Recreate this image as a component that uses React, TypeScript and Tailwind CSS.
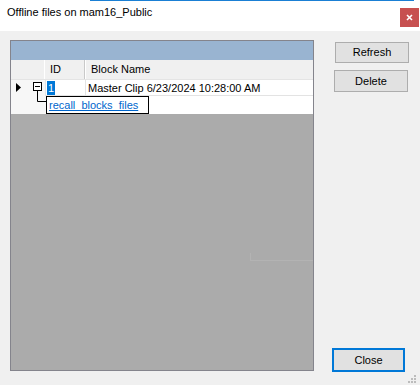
export default function App() {
  return (
    <div
      className="relative w-[420px] h-[385px] overflow-hidden bg-[#f0f0f0] text-[11px] text-black"
      style={{ fontFamily: '"Liberation Sans", Arial, sans-serif' }}
    >
      {/* window top accent */}
      <div className="absolute left-[90px] top-0 h-px w-[324px] bg-[#1a7fd4]" />

      {/* title bar */}
      <div className="flex h-[31px] bg-white">
        <div className="pl-[7px] pt-[6px] leading-[13px]">Offline files on mam16_Public</div>
        <div className="ml-auto mr-px mt-[8px] flex h-[19px] w-[19px] items-center justify-center bg-[#c75050]">
          <svg width="7" height="7" viewBox="0 0 7 7">
            <path d="M1 1L6 6M6 1L1 6" stroke="#fff" strokeWidth="1.6" />
          </svg>
        </div>
      </div>

      {/* body */}
      <div className="flex pl-[10px] pt-[9px]">
        <DataGrid />

        <div className="ml-[20px] flex h-[331px] w-[76px] flex-col">
          <button className="ml-px mt-[2px] h-[21px] w-[74px] border border-[#adadad] bg-[#e1e1e1] leading-[19px]">
            Refresh
          </button>
          <button className="mt-[7px] h-[22px] w-[74px] border border-[#adadad] bg-[#e1e1e1] leading-[20px]">
            Delete
          </button>
          <button className="-mb-px -ml-[2px] mt-auto h-[24px] w-[73px] border-2 border-[#0078d7] bg-[#e1e1e1] leading-[20px]">
            Close
          </button>
        </div>
      </div>

      {/* size grip */}
      <svg className="absolute left-[407px] top-[374px]" width="10" height="10" viewBox="0 0 10 10">
        <rect x="7" y="1" width="2" height="2" fill="#bcbcbc" />
        <rect x="4" y="4" width="2" height="2" fill="#bcbcbc" />
        <rect x="7" y="4" width="2" height="2" fill="#bcbcbc" />
        <rect x="1" y="7" width="2" height="2" fill="#bcbcbc" />
        <rect x="4" y="7" width="2" height="2" fill="#bcbcbc" />
        <rect x="7" y="7" width="2" height="2" fill="#bcbcbc" />
      </svg>
    </div>
  );
}

function DataGrid() {
  return (
    <div className="relative flex h-[331px] w-[304px] flex-col border border-[#84848c] bg-[#ababab]">
      {/* caption band */}
      <div className="h-[19px] bg-[#99b4d1]" />

      {/* column headers */}
      <div className="flex h-[20px] border-b border-[#e4e4e4] bg-[#f0f0f0] leading-[19px]">
        <div className="w-[34px] border-r border-white" />
        <div className="w-[40px] border-r border-[#c9c9c9] pl-[5px]">ID</div>
        <div className="flex-1 border-l border-white pl-[5px]">Block Name</div>
      </div>

      {/* data row */}
      <div className="flex h-[16px] leading-[16px]">
        <div className="w-[34px] bg-[#f7f7f7]" />
        <div className="w-[40px] border-b border-l border-[#e3e3e3] bg-white">
          <div className="ml-px mt-px h-[14px] w-[8px] bg-[#0078d7] text-center leading-[14px] text-white">1</div>
        </div>
        <div className="flex-1 border-b border-l border-[#e3e3e3] bg-white pl-[2px]">
          Master Clip 6/23/2024 10:28:00 AM
        </div>
      </div>

      {/* child relation row */}
      <div className="flex h-[18px] bg-white">
        <div className="w-[35px] bg-[#f7f7f7]" />
        <div className="h-[18px] w-[103px] border border-black pl-[2px] leading-[16px] text-[#0066cc] underline">
          recall_blocks_files
        </div>
      </div>

      {/* row glyphs: current-row arrow, collapse box, tree line */}
      <svg className="absolute left-0 top-[39px]" width="36" height="24" viewBox="0 0 36 24">
        <path d="M5 3L10 7.5L5 12Z" fill="#000" />
        <rect x="22.5" y="2.5" width="8" height="8" fill="#fff" stroke="#000" />
        <path d="M24 6.5H29" stroke="#000" />
        <path d="M26.5 11V21.5H36" stroke="#000" fill="none" />
      </svg>

      {/* faint repaint ghost */}
      <div className="absolute left-[239px] top-[212px] h-[8px] w-px bg-[#b3b3b3]" />
      <div className="absolute left-[239px] top-[219px] h-px w-[63px] bg-[#b3b3b3]" />
    </div>
  );
}
